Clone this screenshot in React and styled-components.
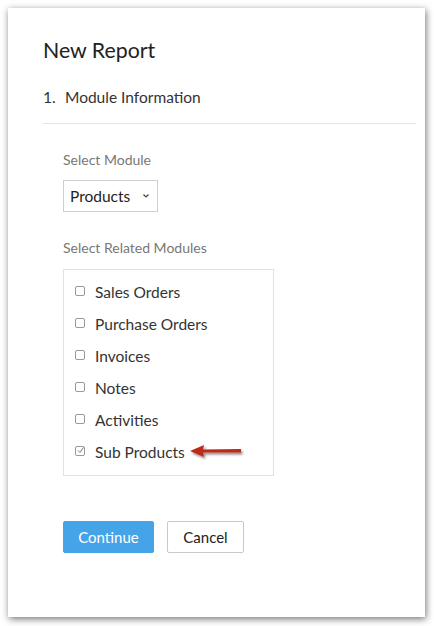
import React from "react";
import styled, { createGlobalStyle } from "styled-components";

const Global = createGlobalStyle`
  html, body { margin: 0; padding: 0; background: #fff; }
  body { font-family: Lato, "Open Sans", sans-serif; color: #333; }
`;

const Page = styled.div`
  padding: 8px;
  width: 434px;
  height: 626px;
  box-sizing: border-box;
`;

const Card = styled.div`
  width: 417px;
  height: 609px;
  background: #fff;
  box-shadow: 1px 2px 7px rgba(0, 0, 0, 0.55);
  box-sizing: border-box;
  padding: 30px 9px 0 35px;
`;

const Title = styled.h1`
  margin: 0;
  font-size: 21.3px;
  font-weight: 400;
  color: #222;
  line-height: 24px;
`;

const Step = styled.div`
  display: flex;
  margin-top: 25px;
  font-size: 15.5px;
  color: #333;
  line-height: 20px;
  padding-bottom: 16px;
  border-bottom: 1px solid #e6e6e6;
`;

const StepNum = styled.span`
  width: 22px;
`;

const Section = styled.div`
  padding-left: 20px;
`;

const Label = styled.div`
  font-size: 14px;
  color: #777;
  line-height: 18px;
  margin-top: ${(p) => p.$top}px;
`;

const Select = styled.div`
  display: inline-flex;
  align-items: center;
  margin-top: 11px;
  height: 32px;
  width: 95px;
  box-sizing: border-box;
  border: 1px solid #cfcfcf;
  padding: 0 0 0 6px;
  font-size: 15.5px;
  color: #222;
  gap: 12px;
`;

const ListBox = styled.div`
  margin-top: 12px;
  width: 211px;
  height: 207px;
  box-sizing: border-box;
  border: 1px solid #e2e2e2;
  padding: 6px 0 0 11px;
`;

const Item = styled.div`
  display: flex;
  align-items: center;
  height: 32px;
  font-size: 15.5px;
  color: #333;
`;

const Box = styled.span`
  width: 8px;
  height: 8px;
  border: 1px solid #9a9a9a;
  border-radius: 2px;
  margin-right: 10px;
  display: flex;
  align-items: center;
  justify-content: center;
  margin-top: -3px;
`;

const Arrow = styled.svg`
  margin-left: 3px;
  margin-top: 2px;
`;

const Buttons = styled.div`
  display: flex;
  gap: 13px;
  margin-top: 45px;
`;

const Button = styled.button`
  height: 32px;
  box-sizing: border-box;
  font-family: inherit;
  font-size: 15px;
  border-radius: 2px;
  padding: 0;
  width: ${(p) => p.$w}px;
  background: ${(p) => (p.$primary ? "#45a3e8" : "#fff")};
  color: ${(p) => (p.$primary ? "#fff" : "#222")};
  border: 1px solid ${(p) => (p.$primary ? "#45a3e8" : "#c9c9c9")};
`;

const modules = [
  { name: "Sales Orders" },
  { name: "Purchase Orders" },
  { name: "Invoices" },
  { name: "Notes" },
  { name: "Activities" },
  { name: "Sub Products", checked: true },
];

export default function App() {
  return (
    <Page>
      <Global />
      <Card>
        <Title>New Report</Title>
        <Step>
          <StepNum>1.</StepNum>
          <span>Module Information</span>
        </Step>
        <Section>
          <Label $top={27}>Select Module</Label>
          <Select>
            <span>Products</span>
            <svg width="8" height="6" viewBox="0 0 8 6">
              <path d="M1.5 1.5 L4 4 L6.5 1.5" fill="none" stroke="#444" strokeWidth="1.2" />
            </svg>
          </Select>
          <Label $top={27}>Select Related Modules</Label>
          <ListBox>
            {modules.map((m) => (
              <Item key={m.name}>
                <Box>
                  {m.checked && (
                    <svg width="7" height="7" viewBox="0 0 7 7">
                      <path d="M1 3.5 L3 5.5 L6.5 0.5" fill="none" stroke="#777" strokeWidth="1" />
                    </svg>
                  )}
                </Box>
                <span>{m.name}</span>
                {m.checked && (
                  <Arrow width="60" height="20" viewBox="0 0 60 20">
                    <defs>
                      <filter id="sh" x="-20%" y="-50%" width="140%" height="200%">
                        <feDropShadow dx="1.5" dy="2" stdDeviation="1.2" floodColor="#000" floodOpacity="0.45" />
                      </filter>
                    </defs>
                    <g filter="url(#sh)">
                      <path d="M2 8 L16 2 L15 6.5 L53 6 L53 9.5 L15 9.5 L16 14 Z" fill="#bd2a1c" />
                    </g>
                  </Arrow>
                )}
              </Item>
            ))}
          </ListBox>
          <Buttons>
            <Button $primary $w={91}>Continue</Button>
            <Button $w={77}>Cancel</Button>
          </Buttons>
        </Section>
      </Card>
    </Page>
  );
}
